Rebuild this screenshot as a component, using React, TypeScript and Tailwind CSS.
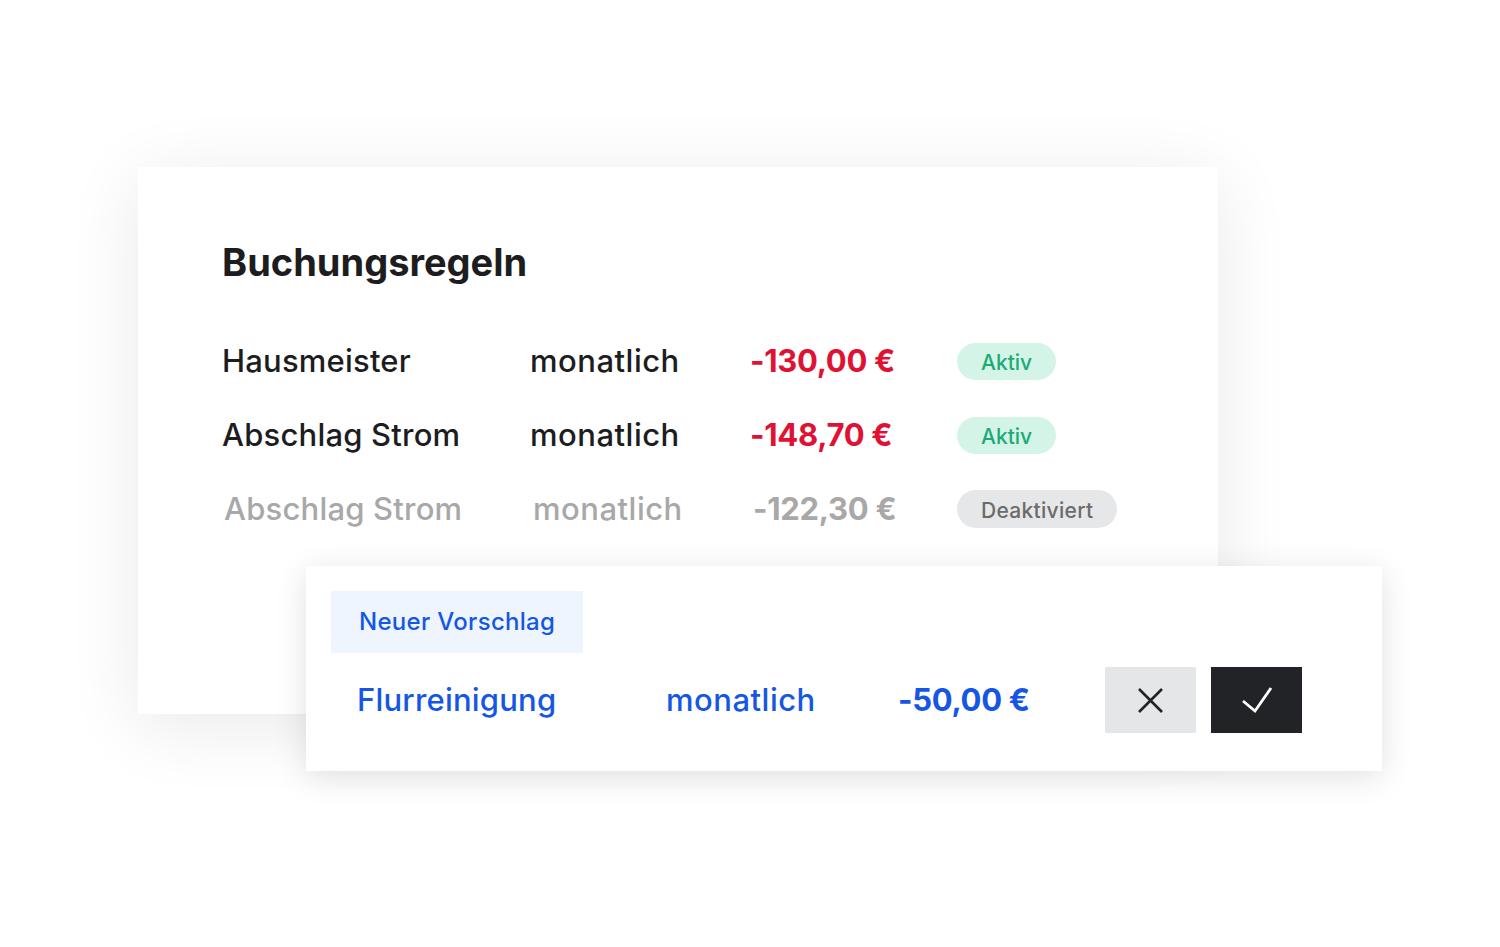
type Rule = {
  name: string;
  interval: string;
  amount: string;
  active: boolean;
};

const rules: Rule[] = [
  { name: "Hausmeister", interval: "monatlich", amount: "-130,00 €", active: true },
  { name: "Abschlag Strom", interval: "monatlich", amount: "-148,70 €", active: true },
  { name: "Abschlag Strom", interval: "monatlich", amount: "-122,30 €", active: false },
];

function RuleRow({ rule }: { rule: Rule }) {
  return (
    <div
      className={
        rule.active
          ? "grid h-[74px] grid-cols-[308px_220px_207px_auto] items-center"
          : "grid h-[74px] grid-cols-[309px_220px_204px_auto] items-center pl-[2px]"
      }
    >
      <span className={rule.active ? "text-[31px] font-medium tracking-[0.2px] text-[#1d1d1f]" : "text-[31px] font-medium tracking-[0.2px] text-[#a8a8a8]"}>
        {rule.name}
      </span>
      <span className={rule.active ? "text-[31px] font-medium tracking-[0.5px] text-[#1d1d1f]" : "text-[31px] font-medium tracking-[0.5px] text-[#a8a8a8]"}>
        {rule.interval}
      </span>
      <span className={rule.active ? "text-[31px] font-bold tracking-[-0.3px] text-[#e01233]" : "text-[31px] font-bold tracking-[-0.3px] text-[#a8a8a8]"}>
        {rule.amount}
      </span>
      <div>
        {rule.active ? (
          <span className="inline-flex h-[37px] items-center rounded-full bg-[#d4f4e8] px-[24px] pt-[3px] text-[21px] font-medium text-[#1eaa78]">
            Aktiv
          </span>
        ) : (
          <span className="inline-flex h-[38px] items-center rounded-full bg-[#e6e7e8] px-[24px] pt-[3px] text-[21px] font-medium tracking-[0.3px] text-[#6b6b6b]">
            Deaktiviert
          </span>
        )}
      </div>
    </div>
  );
}

export default function App() {
  return (
    <div className="relative h-[947px] w-[1500px] overflow-hidden bg-white font-['Inter',sans-serif]">
      <div className="ml-[138px] mt-[167px] h-[547px] w-[1080px] bg-white pl-[84px] pt-[71px] shadow-[0_12px_70px_rgba(0,0,0,0.09)]">
        <h1 className="text-[38px] font-bold leading-[48px] text-[#1d1d1f]">Buchungsregeln</h1>
        <div className="mt-[38px]">
          {rules.map((rule, i) => (
            <RuleRow key={i} rule={rule} />
          ))}
        </div>
      </div>

      {/* proposal card overlapping the rules card */}
      <div className="absolute left-[306px] top-[566px] h-[205px] w-[1076px] bg-white px-[25px] pt-[25px] shadow-[0_6px_30px_rgba(0,0,0,0.12)]">
        <div className="flex h-[62px] w-[252px] items-center whitespace-nowrap bg-[#eef5fe] px-[28px] text-[24px] font-medium tracking-[0.3px] text-[#1557e4]">
          Neuer Vorschlag
        </div>
        <div className="mt-[14px] grid h-[66px] grid-cols-[309px_232px_207px_auto] items-center pl-[26px] text-[#1557e4]">
          <span className="text-[31px] font-medium tracking-[0.2px]">Flurreinigung</span>
          <span className="text-[31px] font-medium tracking-[0.5px]">monatlich</span>
          <span className="text-[31px] font-bold tracking-[-0.3px]">-50,00 €</span>
          <div className="flex gap-[15px]">
            <button className="flex h-[66px] w-[91px] items-center justify-center bg-[#e4e6e8]">
              <svg width="27" height="27" viewBox="0 0 27 27" fill="none" stroke="#222326" strokeWidth="2.6" strokeLinecap="butt">
                <path d="M2 2L25 25M25 2L2 25" />
              </svg>
            </button>
            <button className="flex h-[66px] w-[91px] items-center justify-center bg-[#222326]">
              <svg width="32" height="28" viewBox="0 0 32 28" fill="none" stroke="#ffffff" strokeWidth="2.8" strokeLinecap="butt" strokeLinejoin="miter">
                <path d="M2 15L14 25L30 2" />
              </svg>
            </button>
          </div>
        </div>
      </div>
    </div>
  );
}
